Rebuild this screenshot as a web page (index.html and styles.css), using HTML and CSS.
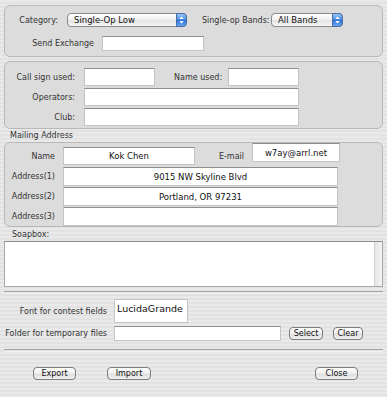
FILE: index.html
```html
<!DOCTYPE html>
<html lang="en">
<head>
  <meta charset="UTF-8">
  <title>Station Info</title>
  <link rel="stylesheet" href="styles.css">
</head>
<body>
  <div class="window">
    <section class="box box-top">
      <div class="row">
        <label class="lbl w-cat">Category:</label>
        <div class="popup w-cat-pop"><span>Single-Op Low</span><i class="stepper"><svg width="10" height="12" viewBox="0 0 10 12"><path d="M5 2 L7.5 5 L2.5 5 Z M5 10 L7.5 7 L2.5 7 Z" fill="#fff"/></svg></i></div>
        <label class="lbl bands">Single-op Bands:</label>
        <div class="popup w-band-pop"><span>All Bands</span><i class="stepper"><svg width="10" height="12" viewBox="0 0 10 12"><path d="M5 2 L7.5 5 L2.5 5 Z M5 10 L7.5 7 L2.5 7 Z" fill="#fff"/></svg></i></div>
      </div>
      <div class="row row-exch">
        <label class="lbl w-exch">Send Exchange</label>
        <input class="field f-exch" type="text">
      </div>
    </section>

    <section class="box box-station">
      <div class="row">
        <label class="lbl w-st">Call sign used:</label>
        <input class="field f-short" type="text">
        <label class="lbl w-name">Name used:</label>
        <input class="field f-short" type="text">
      </div>
      <div class="row">
        <label class="lbl w-st">Operators:</label>
        <input class="field f-wide" type="text">
      </div>
      <div class="row">
        <label class="lbl w-st">Club:</label>
        <input class="field f-wide" type="text">
      </div>
    </section>

    <div class="caption cap-mail">Mailing Address</div>
    <section class="box box-mail">
      <div class="row row-name">
        <label class="lbl w-addr">Name</label>
        <input class="field f-name center" type="text" value="Kok Chen">
        <label class="lbl w-mail">E-mail</label>
        <input class="field f-mail center" type="text" value="w7ay@arrl.net">
      </div>
      <div class="row">
        <label class="lbl w-addr">Address(1)</label>
        <input class="field f-addr center" type="text" value="9015 NW Skyline Blvd">
      </div>
      <div class="row">
        <label class="lbl w-addr">Address(2)</label>
        <input class="field f-addr center" type="text" value="Portland, OR 97231">
      </div>
      <div class="row">
        <label class="lbl w-addr">Address(3)</label>
        <input class="field f-addr center" type="text">
      </div>
    </section>

    <div class="caption cap-soap">Soapbox:</div>
    <div class="soapbox">
      <div class="soap-text"></div>
      <div class="soap-track"></div>
    </div>

    <div class="sep sep-1"></div>

    <div class="prefs">
      <div class="row">
        <label class="lbl w-pref">Font for contest fields</label>
        <input class="field f-font" type="text" value="LucidaGrande">
      </div>
      <div class="row row-folder">
        <label class="lbl w-pref">Folder for temporary files</label>
        <input class="field f-folder" type="text">
        <button class="btn b-select">Select</button>
        <button class="btn b-clear">Clear</button>
      </div>
    </div>

    <div class="sep sep-2"></div>

    <div class="actions">
      <button class="btn b-export">Export</button>
      <button class="btn b-import">Import</button>
      <button class="btn b-close">Close</button>
    </div>
  </div>
</body>
</html>
```

FILE: styles.css
```css
body {
  margin: 0;
  font-family: "DejaVu Sans", "Liberation Sans", sans-serif;
  font-size: 8px;
  color: #333;
}
.window {
  width: 387px;
  height: 397px;
  box-sizing: border-box;
  padding-top: 5px;
  overflow: hidden;
  background-color: #e6e6e6;
  background-image: repeating-linear-gradient(to bottom, #e9e9e9 0, #e9e9e9 2px, #e2e2e2 2px, #e2e2e2 4px);
}
.box {
  margin: 0 4px;
  border: 1px solid #b8b8b8;
  border-radius: 6px;
  background: #dcdcdc;
  box-sizing: border-box;
  display: flex;
  flex-direction: column;
}
.row {
  display: flex;
  align-items: center;
}
.lbl {
  flex: none;
  text-align: right;
  white-space: nowrap;
}
.field {
  flex: none;
  box-sizing: border-box;
  margin: 0;
  padding: 0 3px;
  border: 1px solid #c4c4c4;
  border-top-color: #8e8e8e;
  background: #fff;
  font-family: "DejaVu Sans", sans-serif;
  font-size: 8.5px;
  color: #111;
  outline: none;
}
.field.center {
  text-align: center;
}

/* top box */
.box-top {
  height: 52px;
  padding: 7px 0 0 0;
}
.w-cat { width: 53px; margin-left: 0; }
.popup {
  flex: none;
  box-sizing: border-box;
  height: 14px;
  margin-left: 9px;
  display: flex;
  align-items: center;
  justify-content: space-between;
  border: 1px solid #8a8a8a;
  border-radius: 4px;
  background: linear-gradient(#ffffff, #eeeeee 50%, #e2e2e2 51%, #f6f6f6);
  font-size: 8.5px;
  color: #111;
  padding-left: 6px;
}
.w-cat-pop { width: 120px; }
.w-band-pop { width: 72px; margin-left: 5px; }
.bands { margin-left: 15px; width: 64px; }
.stepper {
  width: 11px;
  height: 14px;
  margin-right: -1px;
  border-radius: 0 4px 4px 0;
  background: linear-gradient(#9cc4f5, #3f86e0 50%, #2a6fd0 51%, #6aa6f2);
  border: 1px solid #4a6fa8;
  box-sizing: border-box;
  display: flex;
  align-items: center;
  justify-content: center;
}
.row-exch { margin-top: 9px; }
.w-exch { width: 89px; }
.f-exch { width: 102px; height: 15px; margin-left: 8px; }

/* station box */
.box-station {
  margin-top: 4px;
  padding: 6px 0 2px 0;
  gap: 2px;
}
.box-station .row { height: 18px; }
.w-st { width: 70px; margin-right: 9px; }
.f-short { width: 71px; height: 18px; }
.w-name { width: 44px; margin: 0 10px 0 19px; }
.f-wide { width: 215px; height: 18px; }

/* mailing address */
.caption {
  margin-left: 10px;
  font-size: 8px;
  color: #333;
}
.cap-mail { height: 12px; line-height: 12px; margin-top: 1px; }
.box-mail {
  padding: 0;
  gap: 1px;
  height: 85px;
}
.box-mail .row { height: 19px; }
.box-mail .row-name { height: 23px; align-items: flex-start; margin-bottom: 1px; }
.w-addr { width: 50px; margin-right: 8px; }
.row-name .w-addr { margin-top: 9px; }
.f-name { width: 132px; height: 18px; margin-top: 4px; }
.w-mail { width: 28px; margin: 9px 8px 0 21px; }
.f-mail { width: 88px; height: 19px; }
.f-addr { width: 275px; height: 19px; }

/* soapbox */
.cap-soap { height: 14px; line-height: 16px; margin-left: 12px; }
.soapbox {
  margin: 0 4px;
  height: 44px;
  display: flex;
  border: 1px solid #a8a8a8;
  border-top-color: #8c8c8c;
  background: #fff;
}
.soap-text { flex: 1; }
.soap-track {
  width: 7px;
  border-left: 1px solid #cfcfcf;
  background: linear-gradient(to right, #e6e6e6, #f4f4f4);
}

.sep {
  margin: 0 4px;
  height: 1px;
  border-top: 1px solid #a4a4a4;
  border-bottom: 1px solid #f2f2f2;
}
.sep-1 { margin-top: 4px; }

/* prefs */
.prefs {
  display: flex;
  flex-direction: column;
  padding-top: 5px;
}
.w-pref { width: 107px; margin-right: 7px; }
.f-font {
  width: 74px;
  height: 24px;
  font-family: "DejaVu Sans", sans-serif;
  font-size: 9.5px;
  padding: 0 0 5px 2px;
  border-color: #c4c4c4;
}
.row-folder { margin-top: 3px; }
.f-folder { width: 167px; height: 15px; }
.btn {
  flex: none;
  box-sizing: border-box;
  height: 13px;
  padding: 0;
  border: 1px solid #7c7c7c;
  border-radius: 4px;
  background: linear-gradient(#ffffff, #ececec 50%, #dcdcdc 51%, #f2f2f2);
  font-family: "DejaVu Sans", sans-serif;
  font-size: 8px;
  color: #111;
  line-height: 11px;
}
.b-select { width: 34px; margin-left: 8px; }
.b-clear { width: 30px; margin-left: 10px; }
.sep-2 { margin-top: 8px; }

/* bottom buttons */
.actions {
  display: flex;
  padding-top: 15px;
}
.b-export { width: 43px; margin-left: 33px; }
.b-import { width: 44px; margin-left: 31px; }
.b-close { width: 43px; margin-left: auto; margin-right: 29px; }
```
